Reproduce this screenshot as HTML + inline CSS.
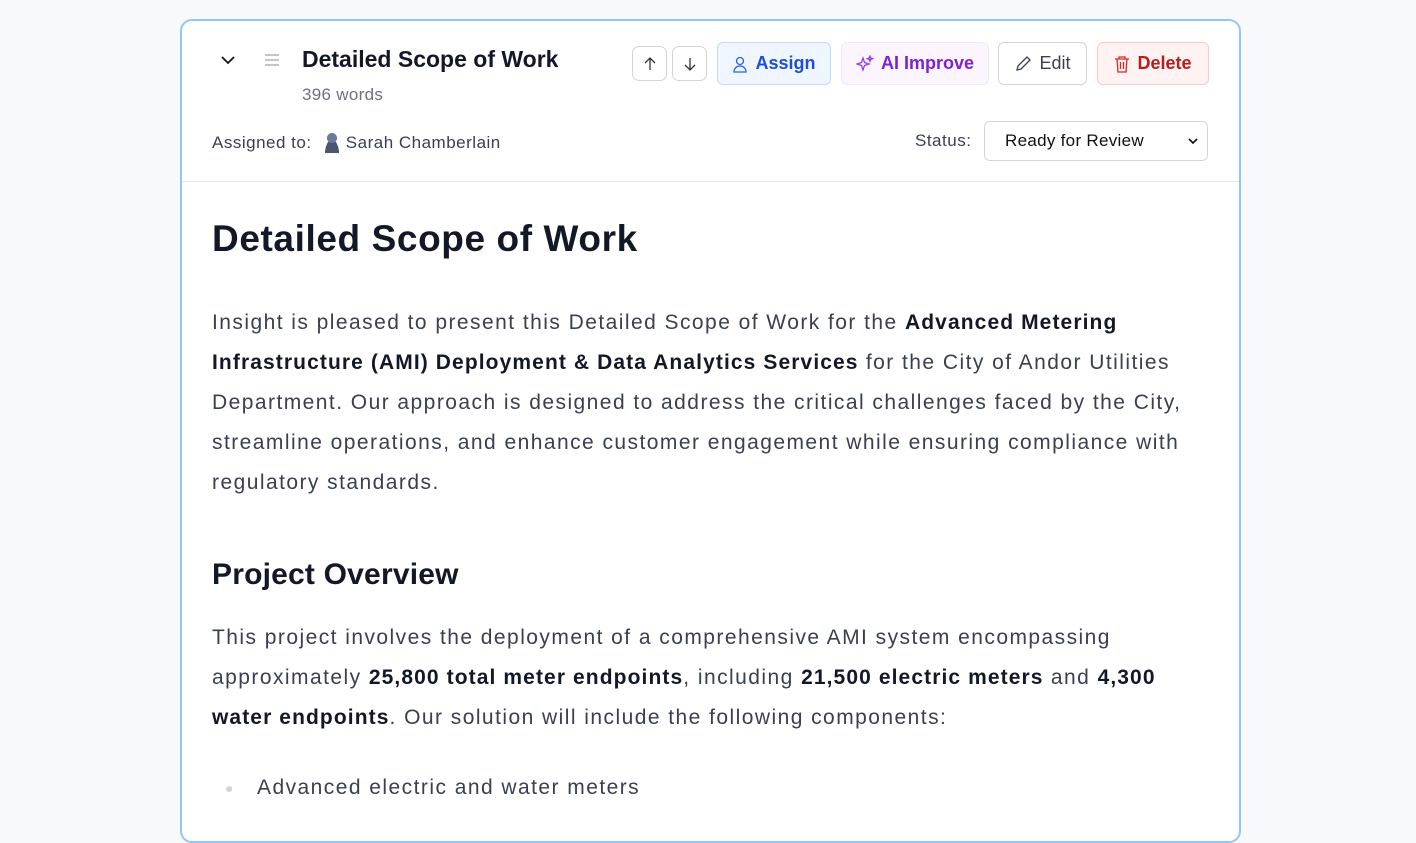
<!DOCTYPE html>
<html><head><style>
body{margin:0;background:#f8f9fb;font-family:"Liberation Sans",sans-serif;width:1416px;height:802px;overflow:hidden;position:relative}
.card{position:absolute;left:180px;top:19px;width:1057px;height:820px;background:#fff;border:2px solid #93c5fd;border-radius:12px}
.abs{position:absolute}
.btn{position:absolute;top:21px;height:43px;box-sizing:border-box;border-radius:6px;border:1px solid #d1d5db;display:flex;align-items:center;justify-content:center;font-size:18px;gap:7px}
.sm{width:35px;height:35px;top:25px;border-radius:7px}
p{margin:0;white-space:nowrap}
.body{position:absolute;left:30px;top:0;color:#374151;font-size:21px;line-height:40px;width:1000px;letter-spacing:1.45px}
b{color:#111827;letter-spacing:1.1px}
</style></head><body>
<div class="card">
 <svg class="abs" style="left:37px;top:30px" width="18" height="18" viewBox="0 0 18 18"><path d="M3 6l6 6 6-6" fill="none" stroke="#111" stroke-width="1.8"/></svg>
 <svg class="abs" style="left:82px;top:32px" width="16" height="14"><path d="M1 2h14M1 7h14M1 12h14" stroke="#9ca3af" stroke-width="1.3"/></svg>
 <div class="abs" style="left:120px;top:25px;font-size:23px;font-weight:bold;color:#111827">Detailed Scope of Work</div>
 <div class="abs" style="left:120px;top:64px;font-size:17px;color:#6b7280;letter-spacing:0.3px">396 words</div>
 <div class="abs" style="left:30px;top:110px;font-size:17px;color:#374151;letter-spacing:0.5px">Assigned to: <span style="display:inline-block;width:22px;height:22px;vertical-align:-5px;margin:0 3px 0 4px;background:radial-gradient(circle at 50% 32%,#6b7a99 26%,transparent 28%),radial-gradient(ellipse at 50% 110%,#4b5570 45%,transparent 47%)"></span>Sarah Chamberlain</div>
 <div class="btn sm" style="left:450px"><svg width="14" height="16"><path d="M7 14V2M2 7l5-5 5 5" fill="none" stroke="#333" stroke-width="1.3"/></svg></div>
 <div class="btn sm" style="left:490px"><svg width="14" height="16"><path d="M7 2v12M2 9l5 5 5-5" fill="none" stroke="#333" stroke-width="1.3"/></svg></div>
 <div class="btn" style="left:535px;width:114px;background:#eff6ff;border-color:#bfdbfe;color:#1d4ed8;font-weight:bold"><svg width="16" height="18"><circle cx="8" cy="6" r="3.5" fill="none" stroke="#2563eb" stroke-width="1.3"/><path d="M2 17c0-4 3-6 6-6s6 2 6 6z" fill="none" stroke="#2563eb" stroke-width="1.3"/></svg>Assign</div>
 <div class="btn" style="left:659px;width:148px;background:#faf5ff;border-color:#ede9fe;color:#7e22ce;font-weight:bold"><svg width="18" height="18"><path d="M7 3l1.5 4.5L13 9l-4.5 1.5L7 15l-1.5-4.5L1 9l4.5-1.5z M14 1l.7 2 2 .7-2 .7-.7 2-.7-2-2-.7 2-.7z" fill="none" stroke="#9333ea" stroke-width="1.2"/></svg>AI Improve</div>
 <div class="btn" style="left:816px;width:89px;color:#374151"><svg width="18" height="18"><path d="M3 15l1-4 9-9 3 3-9 9z" fill="none" stroke="#374151" stroke-width="1.3"/></svg>Edit</div>
 <div class="btn" style="left:915px;width:112px;background:#fef2f2;border-color:#fecaca;color:#b91c1c;font-weight:bold"><svg width="16" height="18"><path d="M1 4h14M5 4V2h6v2M3 4l1 13h8l1-13M6.5 7v7M9.5 7v7" fill="none" stroke="#dc2626" stroke-width="1.3"/></svg>Delete</div>
 <div class="abs" style="left:733px;top:110px;font-size:17px;color:#374151;letter-spacing:0.5px">Status:</div>
 <div class="abs" style="left:802px;top:100px;width:224px;height:40px;box-sizing:border-box;border:1px solid #d1d5db;border-radius:6px;font-size:17px;color:#111;padding:9px 0 0 20px;letter-spacing:0.3px">Ready for Review<svg style="position:absolute;right:9px;top:15px" width="10" height="8"><path d="M1 2l4 4 4-4" fill="none" stroke="#111" stroke-width="1.6"/></svg></div>
 <div class="abs" style="left:0;top:160px;width:1057px;border-top:1px solid #e5e7eb"></div>
 <div class="abs" style="left:0;top:161px;width:1057px;height:660px">
  <div class="body">
   <div style="position:absolute;top:32px;font-size:37px;font-weight:bold;color:#111827;line-height:50px;letter-spacing:0.6px">Detailed Scope of Work</div>
   <p style="position:absolute;top:121px">Insight is pleased to present this Detailed Scope of Work for the <b>Advanced Metering</b><br><b>Infrastructure (AMI) Deployment &amp; Data Analytics Services</b> for the City of Andor Utilities<br>Department. Our approach is designed to address the critical challenges faced by the City,<br>streamline operations, and enhance customer engagement while ensuring compliance with<br>regulatory standards.</p>
   <div style="position:absolute;top:373px;font-size:30px;font-weight:bold;color:#111827;line-height:40px;letter-spacing:0.2px">Project Overview</div>
   <p style="position:absolute;top:436px">This project involves the deployment of a comprehensive AMI system encompassing<br>approximately <b>25,800 total meter endpoints</b>, including <b>21,500 electric meters</b> and <b>4,300</b><br><b>water endpoints</b>. Our solution will include the following components:</p>
   <div style="position:absolute;top:586px;left:45px;white-space:nowrap"><span style="position:absolute;left:-32px;color:#d1d5db;font-size:14px">●</span>Advanced electric and water meters</div>
  </div>
 </div>
</div>
</body></html>
